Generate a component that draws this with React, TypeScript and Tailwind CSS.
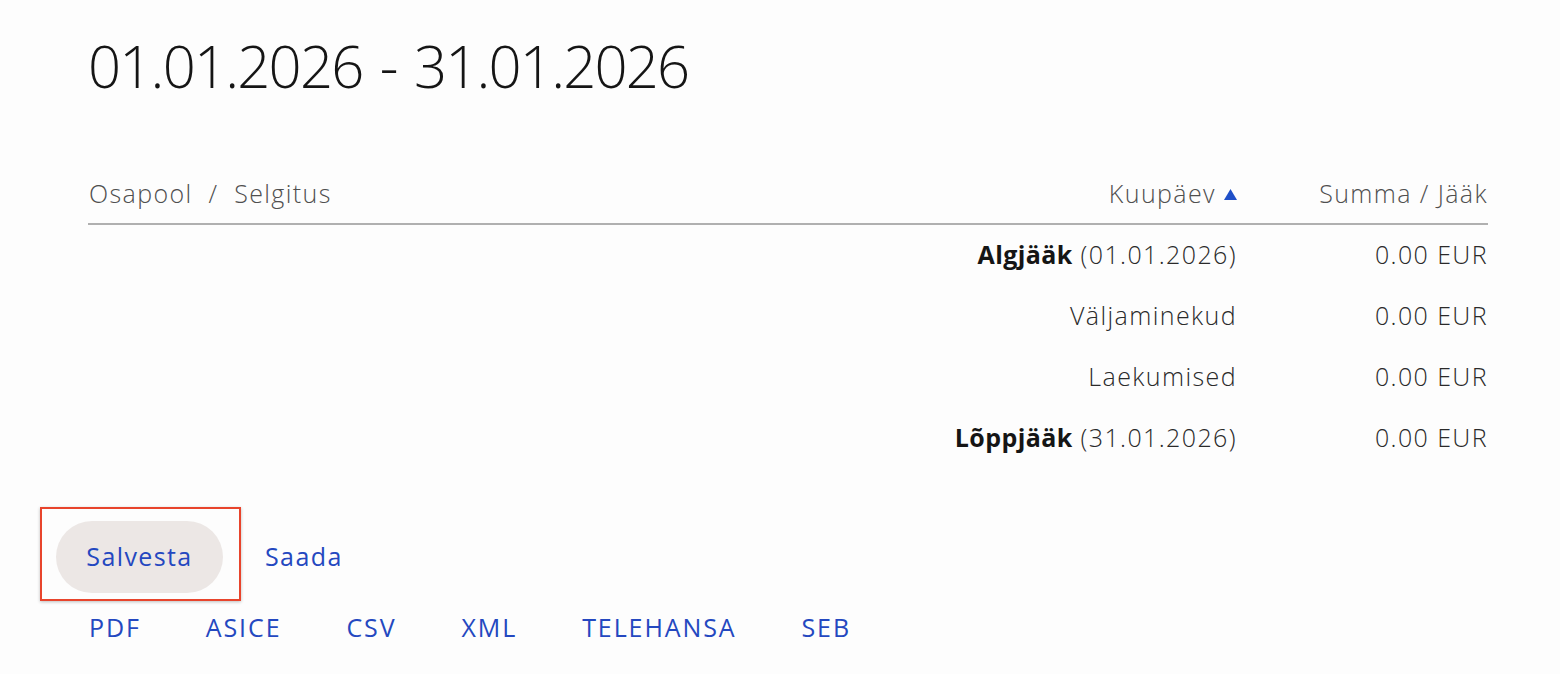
import React from "react";

const rows = [
  { bold: "Algjääk", rest: " (01.01.2026)", amount: "0.00 EUR" },
  { bold: "", rest: "Väljaminekud", amount: "0.00 EUR" },
  { bold: "", rest: "Laekumised", amount: "0.00 EUR" },
  { bold: "Lõppjääk", rest: " (31.01.2026)", amount: "0.00 EUR" },
];

const links = ["PDF", "ASICE", "CSV", "XML", "TELEHANSA", "SEB"];

export default function App() {
  return (
    <div
      className="w-[1560px] h-[674px] bg-[#fdfdfd] overflow-hidden font-[350] tracking-[1.4px]"
      style={{ fontFamily: "'Open Sans', Lato, sans-serif" }}
    >
      <div className="pl-[88px] w-[1488px]">
        <h1 className="pt-[30px] text-[58px] leading-[72px] text-[#151515] font-[350] tracking-[-1.8px] [word-spacing:4px]">
          01.01.2026 - 31.01.2026
        </h1>

        <div className="mt-[74px]">
          <div className="flex items-center h-[49px] border-b-2 border-[#b0b0b0] text-[25px] text-[#4f4f4f] pb-[11px]">
            <div className="flex-1 pl-[1px]">Osapool&nbsp; /&nbsp; Selgitus</div>
            <div className="flex items-center gap-[8px]">
              Kuupäev
              <svg width="13" height="11" viewBox="0 0 13 11">
                <path d="M6.5 0 L13 11 L0 11 Z" fill="#1f4fc8" />
              </svg>
            </div>
            <div className="w-[251px] text-right">Summa / Jääk</div>
          </div>

          <div className="-mt-[1px]">
            {rows.map((r, i) => (
              <div key={i} className="flex items-center h-[61px] text-[25px] text-[#2a2a2a]">
                <div className="flex-1 text-right">
                  {r.bold && <span className="font-bold text-[#151515] tracking-[0.4px]">{r.bold}</span>}
                  {r.rest}
                </div>
                <div className="w-[251px] text-right">{r.amount}</div>
              </div>
            ))}
          </div>
        </div>
      </div>

      <div className="pl-[56px] mt-[53px] flex items-center gap-[42px]">
        <div className="relative">
          <div className="absolute left-[-16px] top-[-14px] w-[201px] h-[94px] border-2 border-[#e8442c] shadow-[0_1px_3px_rgba(0,0,0,0.25)]" />
          <button className="h-[72px] w-[167px] rounded-full bg-[#ece7e5] text-[25px] text-[#2448c0] font-normal">
            Salvesta
          </button>
        </div>
        <span className="text-[25px] text-[#2448c0] font-normal">Saada</span>
      </div>

      <div className="pl-[89px] mt-[16px] flex items-center gap-[65px] text-[25px] text-[#2448c0] font-normal tracking-[1.9px]">
        {links.map((l) => (
          <span key={l}>{l}</span>
        ))}
      </div>
    </div>
  );
}
